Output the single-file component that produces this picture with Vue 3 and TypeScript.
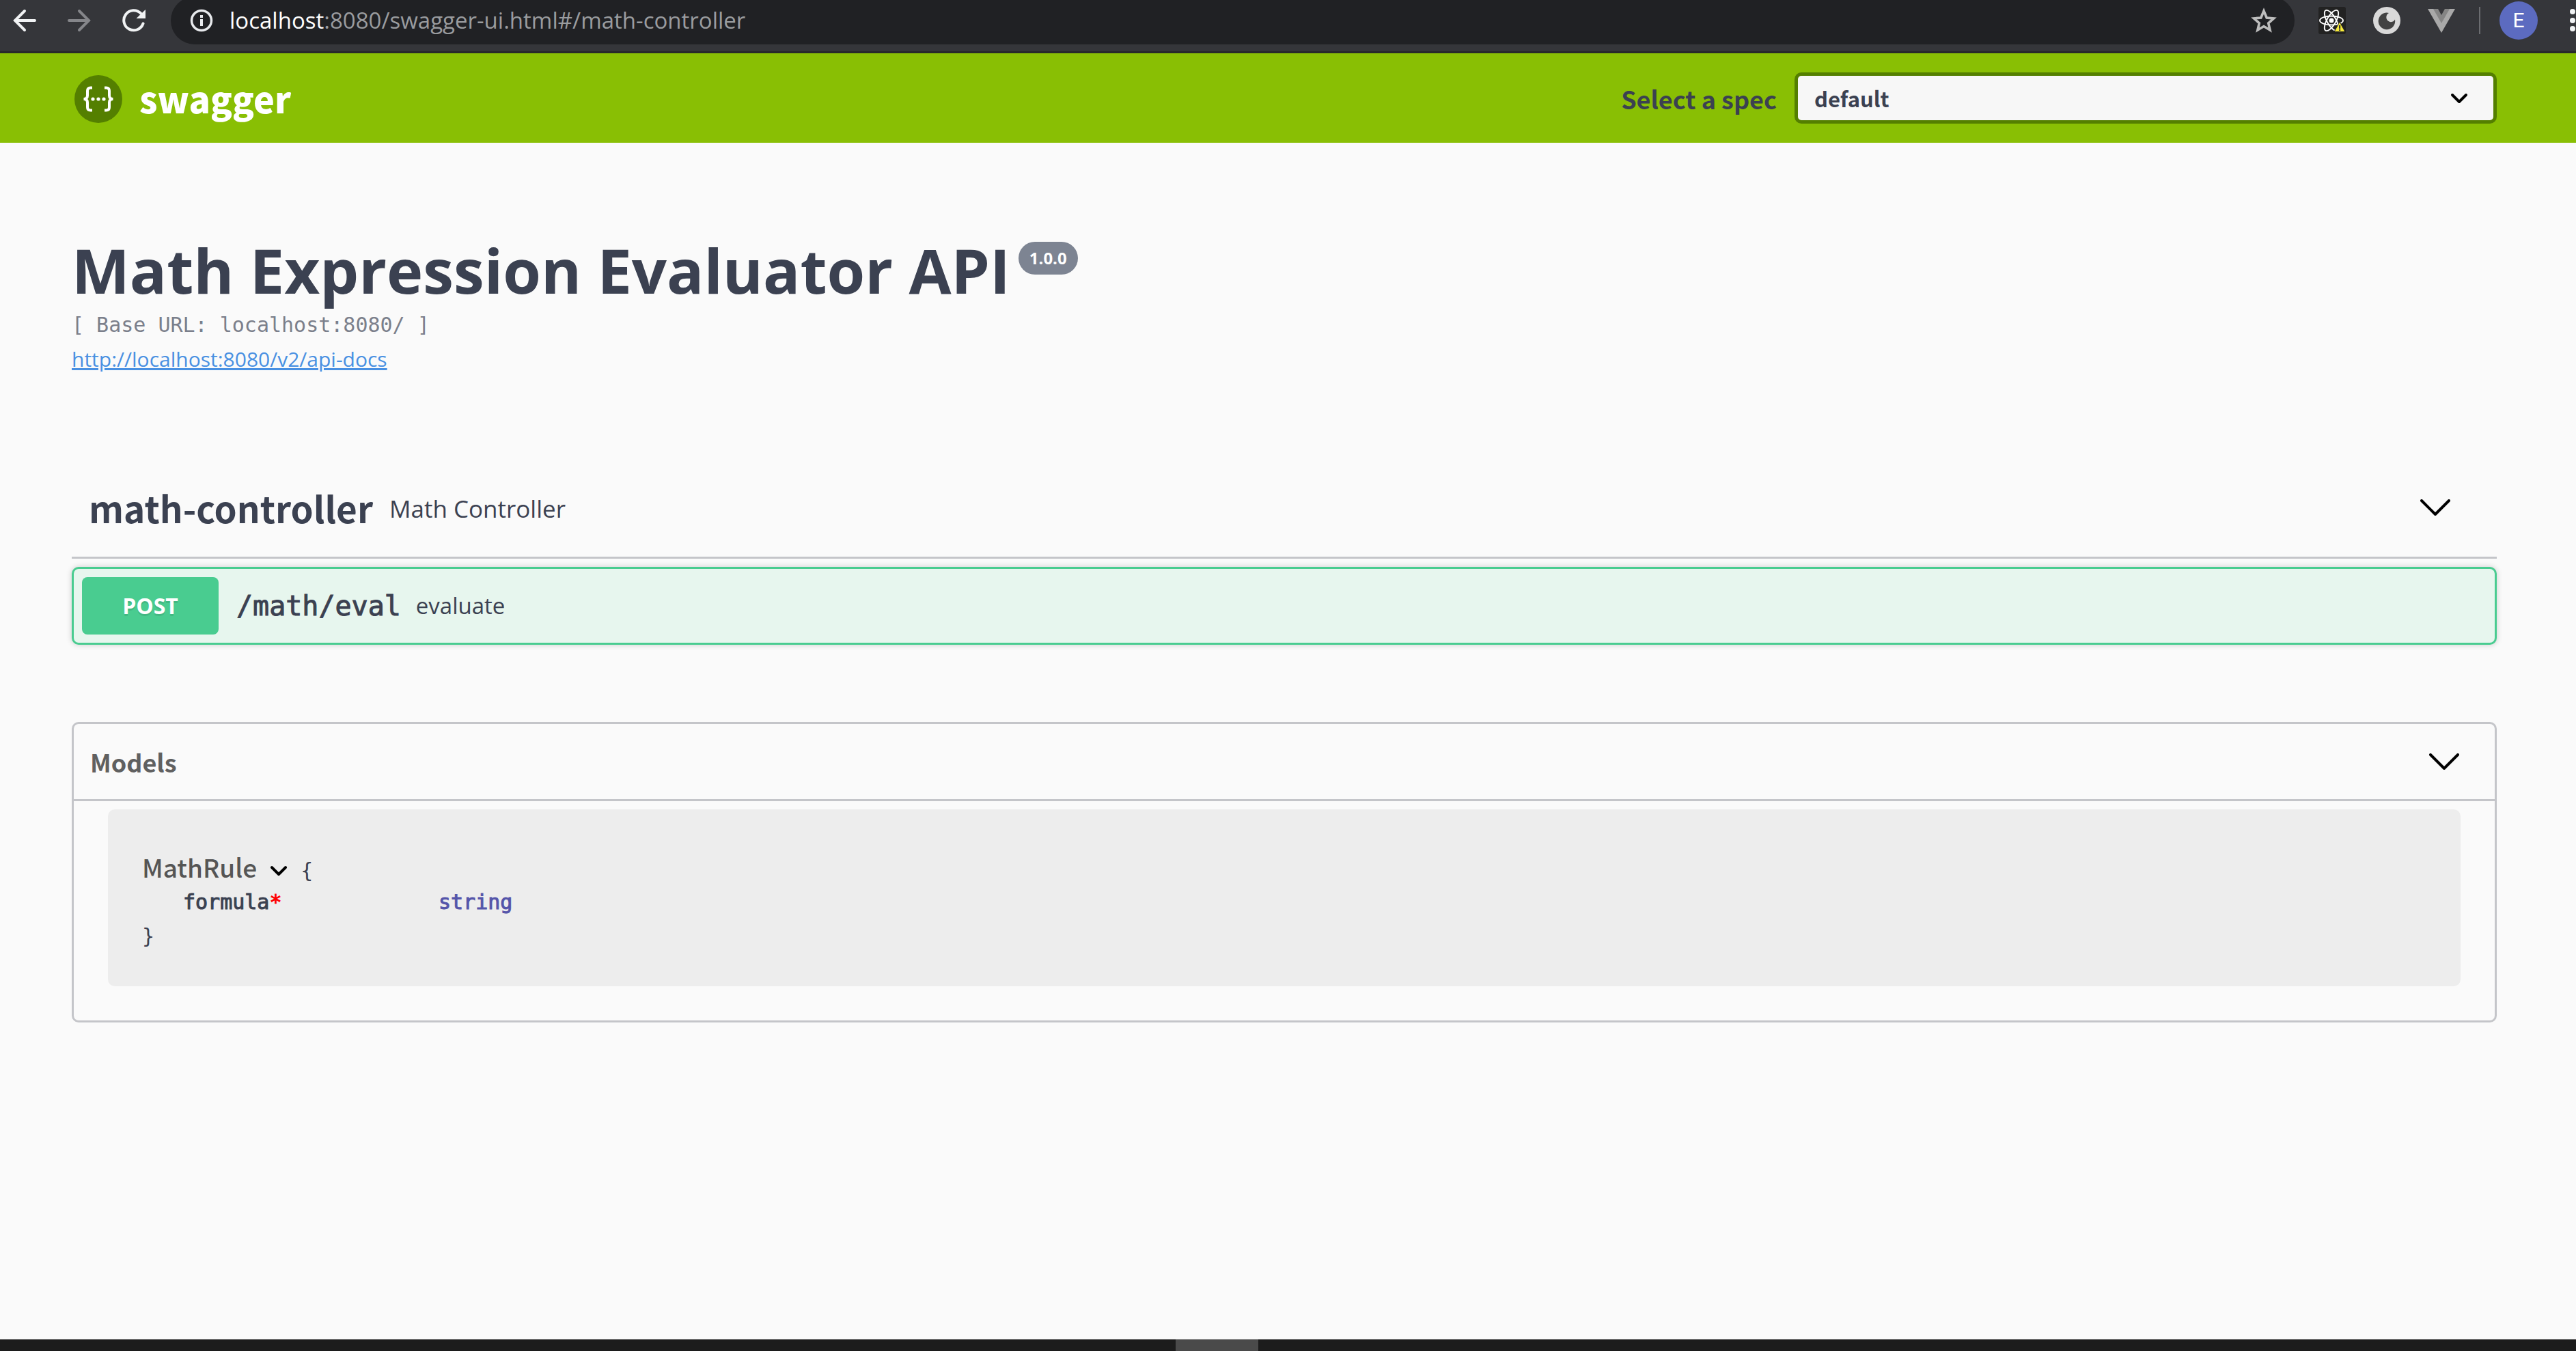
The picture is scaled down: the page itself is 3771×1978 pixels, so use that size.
<script setup lang="ts">
import { ref } from 'vue'

interface Operation {
  method: string
  path: string
  summary: string
}

interface Property {
  name: string
  required: boolean
  type: string
}

const spec = ref('default')
const specs: string[] = ['default']
const operations: Operation[] = [{ method: 'POST', path: '/math/eval', summary: 'evaluate' }]
const properties: Property[] = [{ name: 'formula', required: true, type: 'string' }]
</script>

<template>
  <div class="screen">
    <div class="toolbar">
      <div class="nav">
        <button type="button" class="tool" aria-label="Back">
          <svg viewBox="0 0 34 34" width="34" height="34" fill="none" stroke="#f1f3f4" stroke-width="4" stroke-linecap="round">
            <path d="M32 17H4M17 3L3 17l14 14" />
          </svg>
        </button>
        <button type="button" class="tool" aria-label="Forward">
          <svg viewBox="0 0 34 34" width="34" height="34" fill="none" stroke="#85868a" stroke-width="4" stroke-linecap="round">
            <path d="M2 17h28M17 3l14 14-14 14" />
          </svg>
        </button>
        <button type="button" class="tool" aria-label="Reload">
          <svg viewBox="0 0 34 34" width="34" height="34">
            <path d="M30.500 21.500A14.500 14.500 0 1 1 27 6.500" fill="none" stroke="#f1f3f4" stroke-width="4" stroke-linecap="round" />
            <path d="M34 1v13H20.500z" fill="#f1f3f4" />
          </svg>
        </button>
      </div>
      <div class="address">
        <svg viewBox="0 0 34 34" width="34" height="34">
          <circle cx="17" cy="17" r="14.500" fill="none" stroke="#e8eaed" stroke-width="3.500" />
          <path d="M15 15h4v10h-4zM15 9h4v4h-4z" fill="#e8eaed" />
        </svg>
        <span class="url"><b>localhost</b>:8080/swagger-ui.html#/math-controller</span>
        <button type="button" class="tool" aria-label="Bookmark this page">
          <svg viewBox="0 0 40 40" width="40" height="40">
            <path d="M20 6l4.200 10 10.300.9-7.800 6.900 2.400 10.200-9.100-5.500-9.100 5.500 2.400-10.200-7.800-6.900 10.300-.9z" fill="none" stroke="#bdbdbd" stroke-width="3.600" />
          </svg>
        </button>
      </div>
      <div class="extensions">
        <button type="button" class="tool" aria-label="React Developer Tools">
          <svg viewBox="0 0 40 40" width="40" height="40">
            <rect width="40" height="40" rx="3" fill="#222" />
            <g fill="none" stroke="#fff" stroke-width="1.900">
              <ellipse cx="19" cy="20" rx="17" ry="6.500" />
              <ellipse cx="19" cy="20" rx="17" ry="6.500" transform="rotate(60 19 20)" />
              <ellipse cx="19" cy="20" rx="17" ry="6.500" transform="rotate(120 19 20)" />
            </g>
            <circle cx="19" cy="20" r="3.500" fill="#fff" />
            <path d="M31 22l8 14.500H23z" fill="#f7ea3a" stroke="#222" />
            <path d="M30 27h2.200v5H30zM30 33h2.200v2H30z" fill="#333" />
          </svg>
        </button>
        <button type="button" class="tool" aria-label="Moon extension">
          <svg viewBox="0 0 40 40" width="40" height="40">
            <circle cx="20" cy="20" r="20" fill="#d9d9d9" />
            <path d="M23 9a12.300 12.300 0 1 0 9 9.500 6.500 6.500 0 0 1-9 2.800A7 7 0 0 1 23 9z" fill="#424242" />
          </svg>
        </button>
        <button type="button" class="tool" aria-label="Vue Devtools">
          <svg viewBox="0 0 40 40" width="40" height="40">
            <path d="M0 3h40L20 38z" fill="#a9a9a9" />
            <path d="M8 3h24L20 24z" fill="#858585" />
            <path d="M15 3h10l-5 9z" fill="#35363a" />
          </svg>
        </button>
        <span class="divider"></span>
        <button type="button" class="avatar" aria-label="Profile">E</button>
        <button type="button" class="tool more" aria-label="Menu">
          <svg viewBox="0 0 10 36" width="10" height="36" fill="#f1f3f4">
            <circle cx="5" cy="5" r="4" />
            <circle cx="5" cy="18" r="4" />
            <circle cx="5" cy="30" r="4" />
          </svg>
        </button>
      </div>
    </div>

    <header class="topbar">
      <a class="brand" href="#">
        <svg viewBox="0 0 72 72" width="72" height="72">
          <circle cx="36" cy="37" r="35" fill="#547f00" />
          <g fill="none" stroke="#fff" stroke-width="4">
            <path d="M27 20.500h-2.500q-4.500 0-4.500 4.500v7q0 5-5.500 5 5.500 0 5.500 5v7q0 4.500 4.500 4.500H27" />
            <path d="M45 20.500h2.500q4.500 0 4.500 4.500v7q0 5 5.500 5-5.500 0-5.500 5v7q0 4.500-4.500 4.500H45" />
          </g>
          <g fill="#fff">
            <circle cx="28" cy="37" r="2.600" />
            <circle cx="36" cy="37" r="2.600" />
            <circle cx="44" cy="37" r="2.600" />
          </g>
        </svg>
        <span>swagger</span>
      </a>
      <div class="spec">
        <label for="spec-select">Select a spec</label>
        <div class="select-box">
          <select id="spec-select" v-model="spec">
            <option v-for="s in specs" :key="s" :value="s">{{ s }}</option>
          </select>
          <svg class="caret" viewBox="0 0 26 16" width="26" height="16"><path d="M3 3l10 10L23 3" /></svg>
        </div>
      </div>
    </header>

    <main class="content">
      <section class="info">
        <h1>Math Expression Evaluator API <small>1.0.0</small></h1>
        <p class="base">[ Base URL: localhost:8080/ ]</p>
        <a class="docs" href="http://localhost:8080/v2/api-docs">http://localhost:8080/v2/api-docs</a>
      </section>

      <section class="tag">
        <div class="tag-head">
          <h2>math-controller</h2>
          <p>Math Controller</p>
          <button type="button" class="tool" aria-label="Collapse math-controller">
            <svg class="arrow" viewBox="0 0 44 24" width="44" height="24"><path d="M2 2l20 20L42 2" /></svg>
          </button>
        </div>
        <div v-for="op in operations" :key="op.path" class="operation">
          <button type="button" class="method">{{ op.method }}</button>
          <span class="path">{{ op.path }}</span>
          <span class="summary">{{ op.summary }}</span>
        </div>
      </section>

      <section class="models">
        <div class="models-head">
          <h3>Models</h3>
          <button type="button" class="tool" aria-label="Collapse models">
            <svg class="arrow" viewBox="0 0 44 24" width="44" height="24"><path d="M2 2l20 20L42 2" /></svg>
          </button>
        </div>
        <div class="model">
          <div class="model-head">
            <span class="model-name">MathRule</span>
            <button type="button" class="tool" aria-label="Collapse MathRule">
              <svg class="caret" viewBox="0 0 26 18" width="26" height="18"><path d="M3 3l10 10L23 3" /></svg>
            </button>
            <span>{</span>
          </div>
          <table>
            <tbody>
              <tr v-for="p in properties" :key="p.name">
                <th scope="row">{{ p.name }}<span v-if="p.required" class="star">*</span></th>
                <td>{{ p.type }}</td>
              </tr>
            </tbody>
          </table>
          <div>}</div>
        </div>
      </section>
    </main>

    <footer class="taskbar"><span></span></footer>
  </div>
</template>

<style>
body {
  margin: 0;
  background: #fafafa;
}
</style>

<style scoped>
.screen {
  --head: "Noto Sans CJK SC", "Noto Sans", sans-serif;
  --mono: "DejaVu Sans Mono", monospace;
  display: flex;
  flex-direction: column;
  min-height: 100vh;
  color: #3b4151;
  font-family: "Open Sans", sans-serif;
}
h1, h2, h3, p {
  margin: 0;
}
svg {
  display: block;
}
.tool {
  padding: 0;
  border: 0;
  background: none;
}

.toolbar {
  display: flex;
  align-items: flex-start;
  height: 75px;
  background: #35363a;
  border-bottom: 3px solid #28292b;
}
.nav {
  display: flex;
  gap: 46px;
  padding: 13px 37px 0 19px;
}
.address {
  display: flex;
  flex: 1;
  align-items: center;
  height: 70px;
  margin-top: -5px;
  padding: 0 25px 0 28px;
  box-sizing: border-box;
  border-radius: 35px;
  background: #202124;
}
.url {
  flex: 1;
  margin-left: 24px;
  color: #9a9c9f;
  font-size: 33px;
  line-height: 40px;
}
.url b {
  color: #fff;
  font-weight: 400;
}
.extensions {
  display: flex;
  align-items: center;
  gap: 40px;
  height: 60px;
  padding-left: 35px;
}
.divider {
  width: 2px;
  height: 40px;
  margin-left: -5px;
  background: #6b6c70;
}
.avatar {
  width: 56px;
  height: 56px;
  margin-left: -12px;
  padding: 0;
  border: 0;
  border-radius: 50%;
  background: #5c6bc0;
  color: #fff;
  font: 30px/56px Roboto, sans-serif;
}
.more {
  margin-left: 6px;
}

.topbar {
  display: flex;
  align-items: center;
  justify-content: space-between;
  height: 131px;
  padding: 0 116px 0 108px;
  background: #89bf04;
}
.brand {
  display: flex;
  align-items: center;
  gap: 24px;
  color: #fff;
  font: 900 52px/80px var(--head);
  text-decoration: none;
}
.spec {
  display: flex;
  align-items: center;
  gap: 26px;
  font-family: var(--head);
}
.spec label {
  font-size: 36px;
  font-weight: 700;
  line-height: 60px;
}
.select-box {
  display: grid;
  align-items: center;
  width: 1028px;
}
.select-box > * {
  grid-area: 1 / 1;
}
select {
  width: 100%;
  height: 75px;
  padding: 0 100px 0 24px;
  border: 5px solid #547f00;
  border-radius: 10px;
  background: #f7f7f7;
  color: #3b4151;
  font: 700 31px/60px var(--head);
  appearance: none;
}
.select-box .caret {
  justify-self: end;
  margin-right: 42px;
  pointer-events: none;
}
.caret path, .arrow path {
  fill: none;
  stroke: #000;
  stroke-width: 4;
  stroke-linecap: round;
  stroke-linejoin: round;
}

.content {
  flex: 1;
  padding: 136px 116px 50px 105px;
}
h1 {
  display: flex;
  align-items: flex-start;
  gap: 12px;
  font-size: 90px;
  font-weight: 700;
  line-height: 100px;
}
h1 small {
  margin-top: 9px;
  padding: 0 16px;
  border-radius: 24px;
  background: #7d8492;
  color: #fff;
  font-size: 24px;
  line-height: 48px;
}
.base {
  margin-top: 11px;
  color: #7b7f8b;
  font: 30px/40px var(--mono);
}
.docs {
  display: inline-block;
  margin-top: 10px;
  color: #4990e2;
  font-size: 30px;
  line-height: 40px;
}

.tag-head {
  display: flex;
  align-items: center;
  margin-top: 125px;
  padding: 32px 68px 32px 25px;
  border-bottom: 3px solid #c4c5c9;
}
h2 {
  font: 700 53px/80px var(--head);
}
.tag-head p {
  flex: 1;
  margin-left: 24px;
  padding-top: 4px;
  font-size: 35px;
  line-height: 76px;
}
.operation {
  display: flex;
  align-items: center;
  margin-top: 12px;
  padding: 12px;
  border: 3px solid #49cc90;
  border-radius: 10px;
  background: #e7f6ee;
  box-shadow: 0 0 8px rgba(0, 0, 0, 0.19);
}
.method {
  width: 200px;
  height: 84px;
  padding: 0;
  border: 0;
  border-radius: 8px;
  background: #49cc90;
  color: #fff;
  font: 700 32px/84px "Open Sans", sans-serif;
  text-shadow: 0 3px 0 rgba(0, 0, 0, 0.1);
}
.path {
  margin-left: 26px;
  font: 40px/60px var(--mono);
  -webkit-text-stroke: 1px;
}
.summary {
  margin-left: 22px;
  font-size: 33px;
  line-height: 60px;
}

.models {
  margin-top: 113px;
  border: 3px solid #c4c5c9;
  border-radius: 10px;
}
.models-head {
  display: flex;
  align-items: center;
  justify-content: space-between;
  height: 110px;
  padding: 0 52px 0 24px;
  border-bottom: 3px solid #c4c5c9;
}
h3 {
  color: #606060;
  font: 700 36px/60px var(--head);
}
.model {
  margin: 12px 50px 50px;
  padding: 54px 50px 48px;
  border-radius: 10px;
  background: #ededed;
  font: 30px/50px var(--mono);
}
.model-head {
  display: flex;
  align-items: baseline;
  gap: 19px;
  height: 57px;
}
.model-name {
  color: #555;
  font: 500 37px/60px var(--head);
}
table {
  margin-left: 60px;
  border-collapse: collapse;
}
th, td {
  padding: 0;
  font-weight: 400;
  text-align: left;
  -webkit-text-stroke: 1px;
}
th {
  width: 374px;
}
td {
  color: #5555aa;
}
.star {
  color: #f00;
}

.taskbar {
  display: grid;
  grid-template-columns: 1721fr 121px 1929fr;
  height: 17px;
  background: #1c1c1c;
}
.taskbar span {
  grid-column: 2;
  background: #4a4a4a;
}
</style>
